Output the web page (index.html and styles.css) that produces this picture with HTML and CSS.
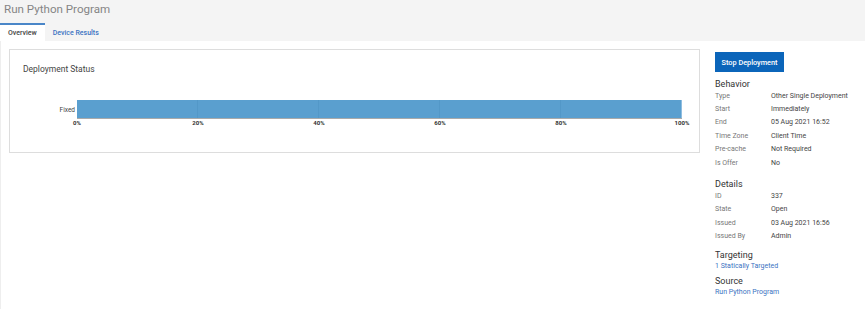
FILE: index.html
```html
<!DOCTYPE html>
<html lang="en">
<head>
    <meta charset="UTF-8">
    <title>Run Python Program</title>
    <link rel="stylesheet" href="styles.css">
</head>
<body>
    <div class="page-header">
        <h1 class="page-title">Run Python Program</h1>
        <div class="tabs">
            <div class="tab active">Overview</div>
            <div class="tab">Device Results</div>
        </div>
    </div>

    <div class="content">
        <div class="main">
            <div class="card">
                <div class="card-title">Deployment Status</div>
                <div class="chart">
                    <div class="chart-row">
                        <div class="chart-label">Fixed</div>
                        <div class="bar-track">
                            <div class="bar" style="width: 100%;"></div>
                        </div>
                    </div>
                    <div class="axis">
                        <span style="left: 0%;">0%</span>
                        <span style="left: 20%;">20%</span>
                        <span style="left: 40%;">40%</span>
                        <span style="left: 60%;">60%</span>
                        <span style="left: 80%;">80%</span>
                        <span style="left: 100%;">100%</span>
                    </div>
                </div>
            </div>
        </div>

        <div class="sidebar">
            <button class="btn-primary">Stop Deployment</button>

            <div class="section first">
                <div class="section-title">Behavior</div>
                <div class="prop"><span class="prop-label">Type</span><span class="prop-value">Other Single Deployment</span></div>
                <div class="prop"><span class="prop-label">Start</span><span class="prop-value">Immediately</span></div>
                <div class="prop"><span class="prop-label">End</span><span class="prop-value">05 Aug 2021 16:52</span></div>
                <div class="prop"><span class="prop-label">Time Zone</span><span class="prop-value">Client Time</span></div>
                <div class="prop"><span class="prop-label">Pre-cache</span><span class="prop-value">Not Required</span></div>
                <div class="prop"><span class="prop-label">Is Offer</span><span class="prop-value">No</span></div>
            </div>

            <div class="section">
                <div class="section-title">Details</div>
                <div class="prop"><span class="prop-label">ID</span><span class="prop-value">337</span></div>
                <div class="prop"><span class="prop-label">State</span><span class="prop-value">Open</span></div>
                <div class="prop"><span class="prop-label">Issued</span><span class="prop-value">03 Aug 2021 16:56</span></div>
                <div class="prop"><span class="prop-label">Issued By</span><span class="prop-value">Admin</span></div>
            </div>

            <div class="section tight">
                <div class="section-title">Targeting</div>
                <a class="link" href="#">1 Statically Targeted</a>
            </div>

            <div class="section short">
                <div class="section-title">Source</div>
                <a class="link" href="#">Run Python Program</a>
            </div>
        </div>
    </div>
</body>
</html>
```

FILE: styles.css
```css
body {
    margin: 0;
    font-family: Roboto, "Liberation Sans", sans-serif;
    background-color: #ffffff;
    color: #333333;
}

.page-header {
    background-color: #f4f4f4;
    height: 41px;
    display: flex;
    flex-direction: column;
    justify-content: space-between;
}

.page-title {
    margin: 0;
    padding: 2px 0 0 4px;
    font-size: 11.6px;
    font-weight: 400;
    line-height: 14px;
    color: #858585;
}

.tabs {
    display: flex;
}

.tab {
    height: 16px;
    padding: 0 8px;
    font-size: 7px;
    font-weight: 500;
    line-height: 16px;
    color: #3b73c2;
    border-top: 2px solid transparent;
}

.tab.active {
    background-color: #ffffff;
    color: #444444;
    border-top-color: #4a86c8;
}

.content {
    display: flex;
    gap: 15px;
    padding: 8px 0 0 8px;
    border-left: 1px solid #eeeeee;
    min-height: 260px;
}

.main {
    flex: 0 0 691px;
}

.card {
    box-sizing: border-box;
    height: 104px;
    border: 1px solid #dddddd;
    padding: 13px 0 0 13px;
}

.card-title {
    font-size: 8.5px;
    line-height: 12px;
    color: #444444;
}

.chart {
    margin-top: 25px;
}

.chart-row {
    display: flex;
    align-items: center;
}

.chart-label {
    width: 52px;
    padding-right: 2px;
    text-align: right;
    font-size: 6.5px;
    color: #444444;
}

.bar-track {
    width: 605px;
    height: 18px;
    border-bottom: 1px solid #aaaaaa;
}

.bar {
    height: 100%;
    background-color: #5a9fcf;
    background-image: repeating-linear-gradient(to right, transparent 0, transparent 120px, #5398c8 120px, #5398c8 121px);
    border-right: 1px solid #8fbde0;
    box-sizing: border-box;
}

.axis {
    position: relative;
    margin-left: 54px;
    width: 605px;
    height: 10px;
}

.axis span {
    position: absolute;
    top: 0;
    transform: translateX(-50%);
    font-size: 6px;
    font-weight: 700;
    color: #333333;
}

.sidebar {
    width: 150px;
    padding-top: 3px;
}

.btn-primary {
    display: block;
    width: 69px;
    height: 20px;
    padding: 0;
    border: none;
    background-color: #0b65ba;
    color: #ffffff;
    font-family: inherit;
    font-size: 7.3px;
    font-weight: 500;
}

.section {
    margin-top: 11px;
}

.section.first {
    margin-top: 8px;
}

.section.tight {
    margin-top: 8px;
}

.section.short {
    margin-top: 5px;
}

.section-title {
    font-size: 9px;
    line-height: 9px;
    color: #333333;
}

.prop {
    display: flex;
    height: 13.4px;
    align-items: center;
    font-size: 7px;
}

.prop-label {
    width: 56px;
    color: #777777;
}

.prop-value {
    color: #444444;
}

.link {
    display: block;
    font-size: 7px;
    line-height: 12px;
    color: #3b73c2;
    text-decoration: none;
}
```
